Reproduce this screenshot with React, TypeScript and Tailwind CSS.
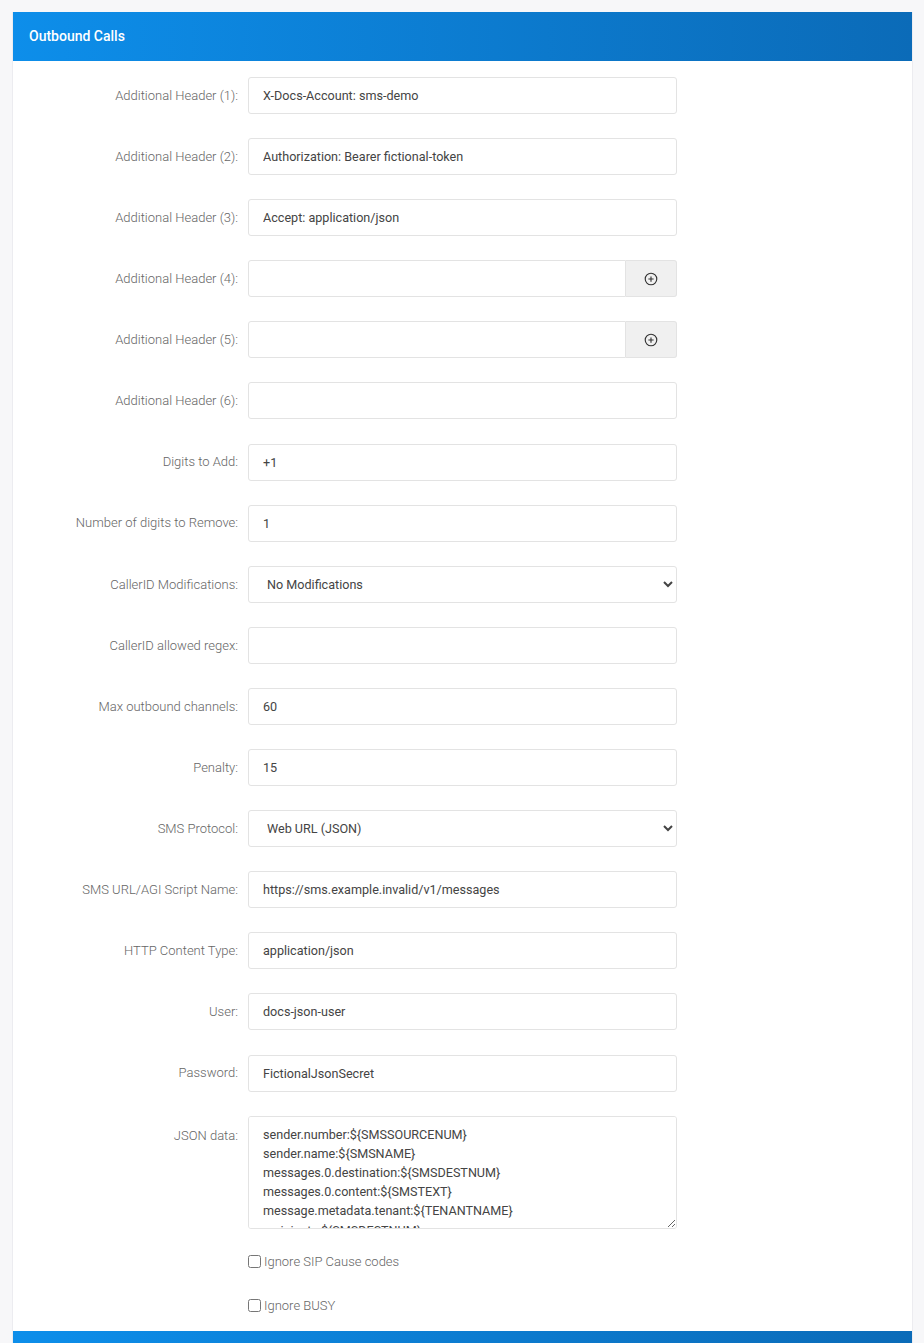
import { ReactNode } from 'react';

const font = { fontFamily: 'Roboto, "Liberation Sans", sans-serif' };

const inputCls =
  'h-[37px] w-[429px] rounded-[3px] border border-[#e3e3e3] bg-white px-[14px] text-[12.6px] text-[#444] outline-none';

function PlusCircle() {
  return (
    <svg width="14" height="14" viewBox="0 0 16 16" fill="none" stroke="#333" strokeWidth="1.3">
      <circle cx="8" cy="8" r="6.6" />
      <path d="M8 5v6M5 8h6" />
    </svg>
  );
}

function Row({ label, children }: { label: string; children: ReactNode }) {
  return (
    <div className="flex items-center">
      <label className="w-[235px] pr-[10px] text-right text-[13px] font-light text-[#666]">{label}</label>
      {children}
    </div>
  );
}

function TextField({ value = '' }: { value?: string }) {
  return <input className={inputCls} defaultValue={value} />;
}

function AddonField() {
  return (
    <div className="flex h-[37px] w-[429px]">
      <input className="h-full flex-1 rounded-l-[3px] border border-[#e3e3e3] bg-white px-[14px] text-[12.6px] outline-none" />
      <button className="flex h-full w-[51px] items-center justify-center rounded-r-[3px] border border-l-0 border-[#e3e3e3] bg-[#f0f0f0]">
        <PlusCircle />
      </button>
    </div>
  );
}

function SelectField({ value }: { value: string }) {
  return (
    <select className="h-[37px] w-[429px] rounded-[3px] border border-[#e3e3e3] bg-white pl-[14px] pr-[6px] text-[12.6px] text-[#444] outline-none" defaultValue={value}>
      <option>{value}</option>
    </select>
  );
}

const jsonData = [
  'sender.number:${SMSSOURCENUM}',
  'sender.name:${SMSNAME}',
  'messages.0.destination:${SMSDESTNUM}',
  'messages.0.content:${SMSTEXT}',
  'message.metadata.tenant:${TENANTNAME}',
  'recipients:${SMSDESTNUM}:array',
].join('\n');

function CheckRow({ label }: { label: string }) {
  return (
    <div className="flex items-center pl-[235px]">
      <input type="checkbox" className="m-0 h-[13px] w-[13px]" />
      <span className="ml-[3px] text-[13px] font-light text-[#666]">{label}</span>
    </div>
  );
}

export default function App() {
  return (
    <div className="min-h-screen bg-[#f7f7f9] px-3 pt-3" style={font}>
      <div className="w-[901px] border-x border-[#ececf0] bg-white">
        <div className="flex h-[49px] items-center bg-gradient-to-r from-[#0d8eea] to-[#0b6bb8] px-4 text-[14px] font-medium text-white">
          Outbound Calls
        </div>
        <div className="flex flex-col gap-[24.1px] pt-4">
          <Row label="Additional Header (1):"><TextField value="X-Docs-Account: sms-demo" /></Row>
          <Row label="Additional Header (2):"><TextField value="Authorization: Bearer fictional-token" /></Row>
          <Row label="Additional Header (3):"><TextField value="Accept: application/json" /></Row>
          <Row label="Additional Header (4):"><AddonField /></Row>
          <Row label="Additional Header (5):"><AddonField /></Row>
          <Row label="Additional Header (6):"><TextField /></Row>
          <Row label="Digits to Add:"><TextField value="+1" /></Row>
          <Row label="Number of digits to Remove:"><TextField value="1" /></Row>
          <Row label="CallerID Modifications:"><SelectField value="No Modifications" /></Row>
          <Row label="CallerID allowed regex:"><TextField /></Row>
          <Row label="Max outbound channels:"><TextField value="60" /></Row>
          <Row label="Penalty:"><TextField value="15" /></Row>
          <Row label="SMS Protocol:"><SelectField value="Web URL (JSON)" /></Row>
          <Row label="SMS URL/AGI Script Name:"><TextField value="https://sms.example.invalid/v1/messages" /></Row>
          <Row label="HTTP Content Type:"><TextField value="application/json" /></Row>
          <Row label="User:"><TextField value="docs-json-user" /></Row>
          <Row label="Password:"><TextField value="FictionalJsonSecret" /></Row>
          <div className="flex items-start">
            <label className="w-[235px] pr-[10px] pt-[10px] text-right text-[13px] font-light text-[#666]">JSON data:</label>
            <textarea
              className="h-[113px] w-[429px] rounded-[3px] border border-[#e3e3e3] bg-white px-[14px] py-[8px] text-[12.6px] leading-[19.2px] text-[#444] outline-none"
              defaultValue={jsonData}
            />
          </div>
        </div>
        <div className="flex flex-col gap-[24.5px] pb-[16px] pt-[23px]">
          <CheckRow label="Ignore SIP Cause codes" />
          <CheckRow label="Ignore BUSY" />
        </div>
        <div className="h-[49px] bg-gradient-to-r from-[#0d8eea] to-[#0b6bb8]" />
      </div>
    </div>
  );
}
